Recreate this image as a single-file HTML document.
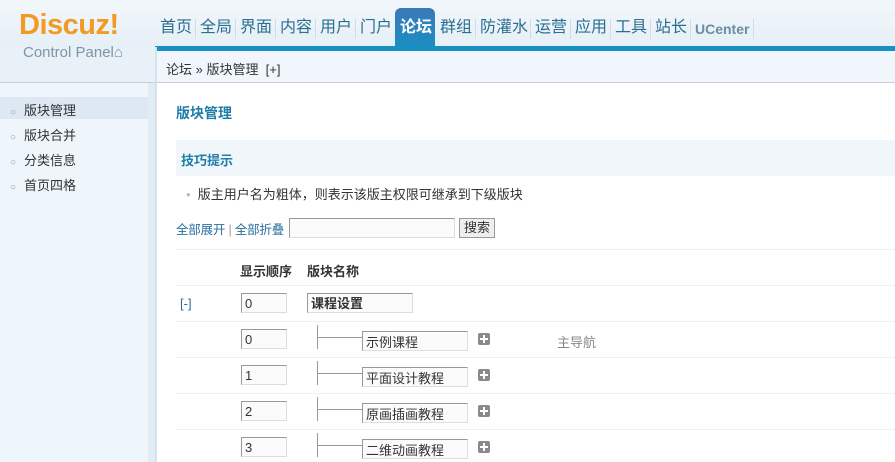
<!DOCTYPE html><html><head><meta charset="utf-8"><style>
body{margin:0;width:895px;height:462px;overflow:hidden;position:relative;background:#fff;font-family:"Liberation Sans","Noto Sans CJK SC",sans-serif;font-size:12px;color:#333}
.a{position:absolute;white-space:nowrap}
.nav{top:17px;font-size:16px;line-height:22px;color:#2a6f8f}
.sep{position:absolute;top:19px;width:1px;height:20px;background:#cfdde8}
.inp{position:absolute;border:1px solid #999;border-right-color:#ddd;border-bottom-color:#ddd;background:#fbfbfb;font-size:13px;line-height:20px;padding-left:3px;box-sizing:border-box;height:20px}
.row{position:absolute;left:176px;right:0;height:1px;background:#eef1f4}
.plus{position:absolute;width:12px;height:12px;background:#8a8a8a;border-radius:2px}
.plus:before{content:"";position:absolute;left:2px;top:5px;width:8px;height:2px;background:#fff}
.plus:after{content:"";position:absolute;left:5px;top:2px;width:2px;height:8px;background:#fff}
.vl{position:absolute;width:1px;background:#999}
.hl{position:absolute;height:1px;background:#999}
.side{position:absolute;left:10px;font-size:13px;color:#333}
.side span{color:#999;font-size:10px;margin-right:8px}
</style></head><body>
<div class="a" style="left:0;top:0;width:895px;height:47px;background:linear-gradient(#f2f7fb,#e6eff7)"></div>
<div class="a" style="left:0;top:47px;width:155px;height:36px;background:#e9f1f8"></div>
<div class="a" style="left:155px;top:46px;width:740px;height:5px;background:#1a8fc2"></div>
<div class="a" style="left:155px;top:51px;width:740px;height:32px;background:#f0f6fb"></div>
<div class="a" style="left:0;top:82px;width:895px;height:1px;background:#c8ced3"></div>
<div class="a" style="left:0;top:83px;width:148px;height:379px;background:#eef5fb"></div>
<div class="a" style="left:148px;top:83px;width:7px;height:379px;background:#e2ecf5"></div>
<div class="a" style="left:155px;top:47px;width:2px;height:415px;background:#d5e3ef"></div>
<div class="a" style="left:19px;top:9px;font-size:29px;font-weight:bold;color:#f29b24;letter-spacing:-0.5px">Discuz!</div>
<div class="a" style="left:23px;top:44px;font-size:15px;color:#7c95a5">Control Panel⌂</div>
<div class="a nav" style="left:160px">首页</div><div class="sep" style="left:195px"></div>
<div class="a nav" style="left:200px">全局</div><div class="sep" style="left:235px"></div>
<div class="a nav" style="left:240px">界面</div><div class="sep" style="left:275px"></div>
<div class="a nav" style="left:280px">内容</div><div class="sep" style="left:315px"></div>
<div class="a nav" style="left:320px">用户</div><div class="sep" style="left:355px"></div>
<div class="a nav" style="left:360px">门户</div>
<div class="a" style="left:395px;top:8px;width:40px;height:40px;border-radius:6px 6px 0 0;background:linear-gradient(#3a78b8,#1a8fc2)"></div>
<div class="a nav" style="left:400px;color:#fff;font-weight:bold">论坛</div>
<div class="a nav" style="left:440px">群组</div><div class="sep" style="left:475px"></div>
<div class="a nav" style="left:480px">防灌水</div><div class="sep" style="left:530px"></div>
<div class="a nav" style="left:535px">运营</div><div class="sep" style="left:570px"></div>
<div class="a nav" style="left:575px">应用</div><div class="sep" style="left:610px"></div>
<div class="a nav" style="left:615px">工具</div><div class="sep" style="left:650px"></div>
<div class="a nav" style="left:655px">站长</div><div class="sep" style="left:690px"></div>
<div class="a nav" style="left:695px;font-size:14px;top:18px;font-weight:bold;color:#6a8fa5">UCenter</div><div class="sep" style="left:753px"></div>
<div class="a" style="left:166px;top:59px;font-size:13px;color:#333">论坛 » 版块管理 &nbsp;[+]</div>
<div class="a" style="left:0;top:97px;width:148px;height:22px;background:#dde8f3"></div>
<div class="side" style="top:100px"><span>○</span>版块管理</div>
<div class="side" style="top:125px"><span>○</span>版块合并</div>
<div class="side" style="top:150px"><span>○</span>分类信息</div>
<div class="side" style="top:175px"><span>○</span>首页四格</div>
<div class="a" style="left:176px;top:103px;font-size:14px;font-weight:bold;color:#1f7ea8">版块管理</div>
<div class="a" style="left:176px;top:140px;width:719px;height:36px;background:#f1f6fa"></div>
<div class="a" style="left:181px;top:150px;font-size:13px;font-weight:bold;color:#1f7ea8">技巧提示</div>
<div class="a" style="left:186px;top:184px;font-size:13px;color:#333"><span style="color:#bbb">•</span>&nbsp; 版主用户名为粗体，则表示该版主权限可继承到下级版块</div>
<div class="a" style="left:176px;top:219px;font-size:12.5px;color:#2a6f9f;letter-spacing:-0.2px">全部展开 <span style="color:#999">|</span> 全部折叠</div>
<div class="inp" style="left:289px;top:218px;width:166px"></div>
<div class="a" style="left:459px;top:218px;width:36px;height:20px;border:1px solid #999;box-sizing:border-box;background:#eee;font-size:13px;text-align:center;line-height:18px">搜索</div>
<div class="row" style="top:249px"></div>
<div class="a" style="left:240px;top:261px;font-size:13px;font-weight:bold">显示顺序</div>
<div class="a" style="left:307px;top:261px;font-size:13px;font-weight:bold">版块名称</div>
<div class="row" style="top:285px"></div>
<div class="a" style="left:180px;top:296px;font-size:13px;color:#2a6f9f">[-]</div>
<div class="inp" style="left:241px;top:293px;width:46px">0</div>
<div class="inp" style="left:307px;top:293px;width:106px;font-weight:bold">课程设置</div>
<div class="row" style="top:321px"></div>
<div class="inp" style="left:241px;top:329px;width:46px">0</div>
<div class="vl" style="left:317px;top:325px;height:24px"></div><div class="hl" style="left:317px;top:337px;width:45px"></div>
<div class="inp" style="left:362px;top:331px;width:106px;line-height:22px">示例课程</div><div class="plus" style="left:478px;top:333px"></div>
<div class="a" style="left:557px;top:332px;font-size:13px;color:#888">主导航</div>
<div class="row" style="top:357px"></div>
<div class="inp" style="left:241px;top:365px;width:46px">1</div>
<div class="vl" style="left:317px;top:361px;height:24px"></div><div class="hl" style="left:317px;top:373px;width:45px"></div>
<div class="inp" style="left:362px;top:367px;width:106px;line-height:22px">平面设计教程</div><div class="plus" style="left:478px;top:369px"></div>
<div class="row" style="top:393px"></div>
<div class="inp" style="left:241px;top:401px;width:46px">2</div>
<div class="vl" style="left:317px;top:397px;height:24px"></div><div class="hl" style="left:317px;top:409px;width:45px"></div>
<div class="inp" style="left:362px;top:403px;width:106px;line-height:22px">原画插画教程</div><div class="plus" style="left:478px;top:405px"></div>
<div class="row" style="top:429px"></div>
<div class="inp" style="left:241px;top:437px;width:46px">3</div>
<div class="vl" style="left:317px;top:433px;height:24px"></div><div class="hl" style="left:317px;top:445px;width:45px"></div>
<div class="inp" style="left:362px;top:439px;width:106px;line-height:22px">二维动画教程</div><div class="plus" style="left:478px;top:441px"></div>
</body></html>
